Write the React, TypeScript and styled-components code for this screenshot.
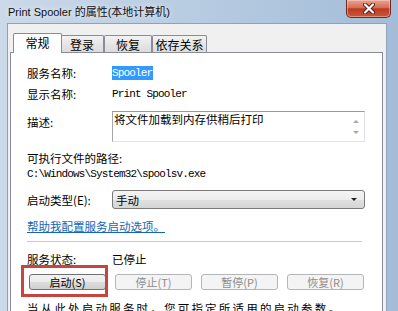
import { FC } from "react";
import styled, { createGlobalStyle } from "styled-components";

const GlobalStyle = createGlobalStyle`
  html, body {
    margin: 0;
    padding: 0;
    width: 398px;
    height: 311px;
    overflow: hidden;
  }
  body {
    font-family: "Noto Sans CJK SC", "Liberation Sans", sans-serif;
    font-size: 11.5px;
    color: #000;
  }
  * {
    box-sizing: border-box;
  }
`;

const Frame = styled.div`
  width: 398px;
  height: 311px;
  overflow: hidden;
  display: flex;
  flex-direction: column;
  background: linear-gradient(90deg, #cbd9e8 0%, #b9cde2 45%, #a3bcd8 100%);
`;

const TitleBar = styled.div`
  height: 23px;
  flex: none;
  display: flex;
  align-items: flex-start;
  padding-left: 8px;
`;

const Title = styled.span`
  line-height: 24px;
  font-family: "Liberation Sans", "Noto Sans CJK SC", sans-serif;
  font-size: 11px;
  color: #111;
  text-shadow: 0 0 6px rgba(255, 255, 255, 0.9);
`;

const CloseButton = styled.div`
  margin-left: auto;
  margin-right: 7px;
  width: 45px;
  height: 18px;
  border: 1px solid #6e2a22;
  border-top: none;
  border-radius: 0 0 5px 5px;
  background: linear-gradient(#e6a594, #d66c55 45%, #bb3a22 52%, #c9583c);
  box-shadow: inset 0 0 0 1px rgba(255, 220, 210, 0.45);
  display: flex;
  align-items: center;
  justify-content: center;
`;

const FrameBody = styled.div`
  flex: 1;
  display: flex;
  padding: 0 11px 0 7px;
  min-height: 0;
`;

const Client = styled.div`
  flex: 1;
  background: #f0f0f0;
  border: 1px solid #8ea3b9;
  border-bottom: none;
  padding: 9px 3px 0 2px;
  display: flex;
  flex-direction: column;
`;

const TabStrip = styled.div`
  display: flex;
  align-items: flex-end;
  height: 20px;
  padding-left: 5px;
  margin-bottom: -1px;
  position: relative;
  z-index: 1;
`;

const Tab = styled.div<{ $active?: boolean; $w: number }>`
  width: ${(p) => p.$w + (p.$active ? 4 : 0)}px;
  height: ${(p) => (p.$active ? 20 : 17)}px;
  margin: ${(p) => (p.$active ? "0 -2px" : "0 0 1px")};
  border: 1px solid #898c95;
  border-bottom: none;
  border-radius: 2px 2px 0 0;
  background: ${(p) =>
    p.$active ? "#fff" : "linear-gradient(#f3f3f3, #e6e6e6 50%, #dcdcdc)"};
  position: relative;
  z-index: ${(p) => (p.$active ? 2 : 1)};
  display: flex;
  align-items: center;
  justify-content: center;
  padding-bottom: ${(p) => (p.$active ? 2 : 0)}px;
  font-size: 12px;
`;

const Panel = styled.div`
  flex: 1;
  background: #fff;
  border: 1px solid #898c95;
  padding: 10px 17px 0 16px;
  display: flex;
  flex-direction: column;
`;

const Row = styled.div<{ $h: number; $mt?: number; $top?: boolean }>`
  display: flex;
  align-items: ${(p) => (p.$top ? "flex-start" : "center")};
  height: ${(p) => p.$h}px;
  margin-top: ${(p) => p.$mt ?? 0}px;
  flex: none;
`;

const Label = styled.span<{ $pt?: number }>`
  width: 85px;
  flex: none;
  line-height: 20px;
  padding-top: ${(p) => p.$pt ?? 0}px;
`;

const Mono = styled.span`
  font-family: "Liberation Mono", monospace;
  font-size: 11px;
  letter-spacing: -0.85px;
  line-height: 14px;
`;

const Selected = styled(Mono)`
  background: #3399ff;
  color: #fff;
  padding: 0 1px 0 0;
`;

const DescBox = styled.div`
  flex: 1;
  height: 31px;
  border: 1px solid #dfe3e8;
  border-top-color: #9a9a9a;
  border-left-color: #a6a6a6;
  display: flex;
`;

const DescText = styled.span`
  flex: 1;
  line-height: 14px;
  padding: 0 0 0 1px;
`;

const ScrollColumn = styled.div`
  width: 17px;
  display: flex;
  flex-direction: column;
  align-items: center;
  padding-top: 8px;
  gap: 8px;
`;

const Arrow = styled.div<{ $down?: boolean; $color?: string }>`
  width: 0;
  height: 0;
  border-left: 3px solid transparent;
  border-right: 3px solid transparent;
  ${(p) =>
    p.$down
      ? `border-top: 3px solid ${p.$color ?? "#a8a8a8"};`
      : `border-bottom: 3px solid ${p.$color ?? "#a8a8a8"};`}
`;

const ComboBox = styled.div`
  flex: 1;
  height: 19px;
  border: 1px solid #7a7a7a;
  border-radius: 3px;
  background: linear-gradient(#f4f4f4, #ececec 50%, #e0e0e0 51%, #d6d6d6);
  display: flex;
  align-items: center;
  padding: 0 7px 0 3px;
  justify-content: space-between;
`;

const HelpLink = styled.span`
  color: #1566b6;
  text-decoration: underline;
  line-height: 16px;
`;

const Separator = styled.div`
  height: 1px;
  margin: 7px 3px 0 0;
  background: #c9c9c9;
  flex: none;
`;

const ButtonRow = styled.div`
  display: flex;
  gap: 9px;
  padding-left: 2px;
  margin-top: 7px;
  height: 16px;
  flex: none;
`;

const Marked = styled.div`
  position: relative;
`;

const RedBox = styled.div`
  position: absolute;
  left: -8px;
  right: -2px;
  top: -9px;
  bottom: -7px;
  border: 3px solid #c6453f;
`;

const Button = styled.div<{ $disabled?: boolean }>`
  width: 77px;
  height: 16px;
  border: 1px solid ${(p) => (p.$disabled ? "#b3b6b8" : "#707070")};
  border-radius: 3px;
  background: ${(p) =>
    p.$disabled
      ? "#f4f4f4"
      : "linear-gradient(#f2f2f2, #ebebeb 50%, #dddddd 51%, #cfcfcf)"};
  color: ${(p) => (p.$disabled ? "#8c8c8c" : "#000")};
  font-size: 11px;
  display: flex;
  align-items: center;
  justify-content: center;
`;

const Note = styled.div`
  margin-top: 10px;
  line-height: 16px;
  white-space: nowrap;
  letter-spacing: 2.2px;
`;

const App: FC = () => {
  return (
    <>
      <GlobalStyle />
      <Frame>
        <TitleBar>
          <Title>Print Spooler 的属性(本地计算机)</Title>
          <CloseButton>
            <svg width="14" height="11" viewBox="0 0 14 11">
              <path
                d="M3 1.5 L11 9.5 M11 1.5 L3 9.5"
                stroke="#5a1a12"
                strokeWidth="4"
                strokeLinecap="round"
              />
              <path
                d="M3 1.5 L11 9.5 M11 1.5 L3 9.5"
                stroke="#fff"
                strokeWidth="2.2"
                strokeLinecap="round"
              />
            </svg>
          </CloseButton>
        </TitleBar>
        <FrameBody>
          <Client>
            <TabStrip>
              <Tab $active $w={45}>常规</Tab>
              <Tab $w={44}>登录</Tab>
              <Tab $w={48}>恢复</Tab>
              <Tab $w={55}>依存关系</Tab>
            </TabStrip>
            <Panel>
              <Row $h={20}>
                <Label>服务名称:</Label>
                <Selected>Spooler</Selected>
              </Row>
              <Row $h={22}>
                <Label>显示名称:</Label>
                <Mono>Print Spooler</Mono>
              </Row>
              <Row $h={31} $mt={6} $top>
                <Label $pt={1}>描述:</Label>
                <DescBox>
                  <DescText>将文件加载到内存供稍后打印</DescText>
                  <ScrollColumn>
                    <Arrow />
                    <Arrow $down />
                  </ScrollColumn>
                </DescBox>
              </Row>
              <Row $h={16} $mt={8}>
                <span>可执行文件的路径:</span>
              </Row>
              <Row $h={16}>
                <Mono>C:\Windows\System32\spoolsv.exe</Mono>
              </Row>
              <Row $h={19} $mt={8}>
                <Label>启动类型(E):</Label>
                <ComboBox>
                  <span>手动</span>
                  <Arrow $down $color="#222" />
                </ComboBox>
              </Row>
              <Row $h={16} $mt={9}>
                <HelpLink>帮助我配置服务启动选项。</HelpLink>
              </Row>
              <Separator />
              <Row $h={16} $mt={9}>
                <Label>服务状态:</Label>
                <span>已停止</span>
              </Row>
              <ButtonRow>
                <Marked>
                  <Button>启动(S)</Button>
                  <RedBox />
                </Marked>
                <Button $disabled>停止(T)</Button>
                <Button $disabled>暂停(P)</Button>
                <Button $disabled>恢复(R)</Button>
              </ButtonRow>
              <Note>当从此处启动服务时，您可指定所适用的启动参数。</Note>
            </Panel>
          </Client>
        </FrameBody>
      </Frame>
    </>
  );
};

export default App;
